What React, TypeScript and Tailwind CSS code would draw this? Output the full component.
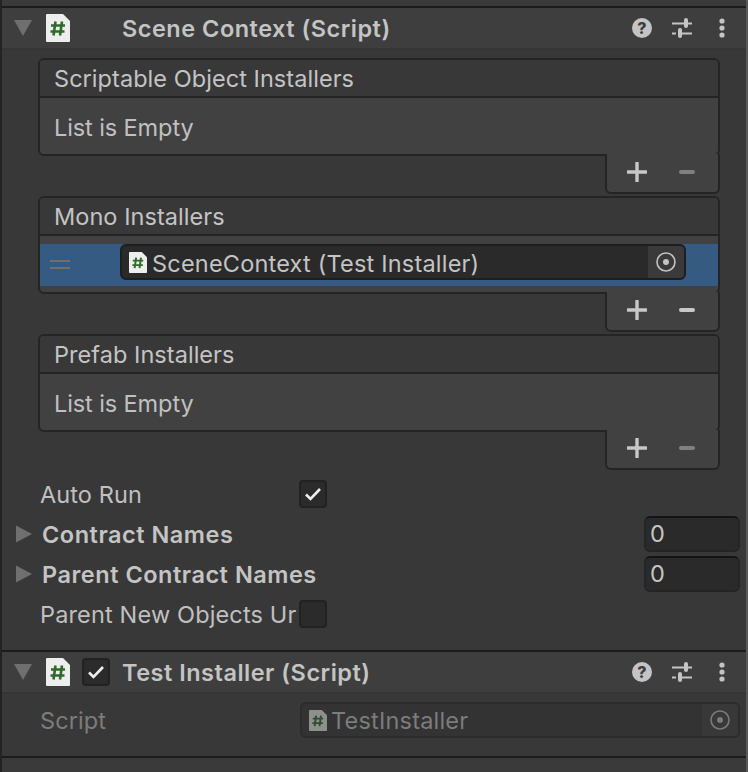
const font = "font-['Inter','Noto_Sans',sans-serif]";

function Triangle({ dir }: { dir: "down" | "right" }) {
  return (
    <svg width="18" height="18" viewBox="0 0 18 18" className="shrink-0">
      {dir === "down" ? <path d="M0 1H18L9 17Z" fill="#6f6f6f" /> : <path d="M1 1L17 9L1 17Z" fill="#6f6f6f" />}
    </svg>
  );
}

function ScriptIcon({ size = 24, dim = false }: { size?: number; dim?: boolean }) {
  const h = Math.round((size * 28) / 24);
  return (
    <svg width={size} height={h} viewBox="0 0 24 28" className="shrink-0">
      <path d="M1 0H17L24 7V27a1 1 0 0 1-1 1H1a1 1 0 0 1-1-1V1a1 1 0 0 1 1-1Z" fill={dim ? "#8f8f8f" : "#eeeeee"} />
      <path
        d="M9.5 7.5L7.5 21.5M16 7.5L14 21.5M5 11.5H19M4.5 17.5H18.5"
        stroke={dim ? "#2f4f2c" : "#2f6a2c"}
        strokeWidth="2.6"
        fill="none"
      />
    </svg>
  );
}

function HelpIcon() {
  return (
    <svg width="20" height="20" viewBox="0 0 20 20" className="shrink-0">
      <circle cx="10" cy="10" r="10" fill="#c4c4c4" />
      <text x="10" y="15.5" textAnchor="middle" fontSize="16" fontWeight="800" fontFamily="Inter, sans-serif" fill="#3e3e3e">
        ?
      </text>
    </svg>
  );
}

function SlidersIcon() {
  return (
    <svg width="20" height="20" viewBox="0 0 20 20" className="shrink-0">
      <path d="M0 5.5H20M0 15.5H4M8 15.5H20" stroke="#c4c4c4" strokeWidth="2" fill="none" />
      <rect x="12" y="0" width="4" height="10" rx="2" fill="#c4c4c4" />
      <rect x="6" y="10" width="4" height="10" rx="2" fill="#c4c4c4" />
    </svg>
  );
}

function DotsIcon() {
  return (
    <svg width="6" height="20" viewBox="0 0 6 20" className="shrink-0">
      <circle cx="3" cy="3" r="2.6" fill="#c4c4c4" />
      <circle cx="3" cy="10" r="2.6" fill="#c4c4c4" />
      <circle cx="3" cy="17" r="2.6" fill="#c4c4c4" />
    </svg>
  );
}

function TargetIcon({ dim = false }: { dim?: boolean }) {
  const c = dim ? "#7b7b7b" : "#c4c4c4";
  return (
    <svg width="20" height="20" viewBox="0 0 20 20" className="shrink-0">
      <circle cx="10" cy="10" r="9" stroke={c} strokeWidth="1.6" fill="none" />
      <circle cx="10" cy="10" r="3" fill={c} />
    </svg>
  );
}

function Checkbox({ checked = false }: { checked?: boolean }) {
  return (
    <div className="flex h-7 w-7 shrink-0 items-center justify-center rounded-[4px] border-2 border-[#222222] bg-[#2b2b2b]">
      {checked && (
        <svg width="18" height="14" viewBox="0 0 18 14">
          <path d="M2 7.5L6.5 12L16 2" stroke="#eeeeee" strokeWidth="2.6" fill="none" />
        </svg>
      )}
    </div>
  );
}

function ComponentHeader({ title, toggle = false }: { title: string; toggle?: boolean }) {
  return (
    <div className="flex h-[42px] items-center border-b-2 border-[#353535] bg-[#3e3e3e] pl-[12px] pr-[21px]">
      <Triangle dir="down" />
      <div className="ml-[14px] w-[24px]">
        <ScriptIcon />
      </div>
      <div className="ml-[12px] w-[28px]">{toggle && <Checkbox checked />}</div>
      <div className="ml-[12px] flex-1 pt-[1px] text-[23.5px] font-semibold leading-none tracking-[0.5px] text-[#c4c4c4]">{title}</div>
      <div className="flex items-center">
        <HelpIcon />
        <div className="ml-[20px]">
          <SlidersIcon />
        </div>
        <div className="ml-[27px]">
          <DotsIcon />
        </div>
      </div>
    </div>
  );
}

function ListFooter({ minusDim = false }: { minusDim?: boolean }) {
  return (
    <div className="relative z-10 ml-[567px] -mt-[2px] flex h-[40px] w-[115px] rounded-b-[6px] border-x-2 border-b-2 border-[#242424] bg-[#414141] pl-[20px]">
      <svg width="20" height="20" viewBox="0 0 20 20" className="mt-[8px] shrink-0">
        <path d="M10 1V19M1 10H19" stroke="#c8c8c8" strokeWidth="3.4" strokeLinecap="round" fill="none" />
      </svg>
      <svg width="16" height="4" viewBox="0 0 16 4" className="ml-[32px] mt-[16px] shrink-0">
        <rect width="16" height="4" rx="2" fill={minusDim ? "#808080" : "#c8c8c8"} />
      </svg>
    </div>
  );
}

function ReorderList({ title, children, minusDim }: { title: string; children: React.ReactNode; minusDim?: boolean }) {
  return (
    <div>
      <div className="overflow-hidden rounded-[6px] border-2 border-[#242424] bg-[#414141]">
        <div className="flex h-[38px] items-center border-b-2 border-[#242424] bg-[#383838] pl-[14px] pt-[2px] text-[23.5px] leading-none tracking-[0.05px] text-[#c4c4c4]">
          {title}
        </div>
        {children}
      </div>
      <ListFooter minusDim={minusDim} />
    </div>
  );
}

function EmptyBody() {
  return <div className="flex h-[56px] items-center pl-[14px] pt-[4px] text-[23.5px] leading-none tracking-[-0.1px] text-[#c0c0c0]">List is Empty</div>;
}

function FoldoutRow({ label }: { label: string }) {
  return (
    <div className="flex h-[40px] items-center pl-[14px] pr-[6px]">
      <svg width="16" height="18" viewBox="0 0 16 18" className="shrink-0">
        <path d="M0 0.5L16 9L0 17.5Z" fill="#6f6f6f" />
      </svg>
      <div className="ml-[10px] flex-1 pt-[1px] text-[23.5px] font-semibold leading-none tracking-[0.52px] text-[#c4c4c4]">{label}</div>
      <div className="flex h-[36px] w-[96px] items-center rounded-[6px] border-2 border-[#242424] border-t-[#141414] bg-[#2a2a2a] pl-[4px] text-[23.5px] leading-none text-[#c4c4c4]">
        0
      </div>
    </div>
  );
}

export default function App() {
  return (
    <div className={`${font} flex h-[772px] w-[748px] flex-col overflow-hidden border-l-2 border-r-2 border-l-[#232323] border-r-[#5a5a5a] bg-[#383838]`}>
      <div className="h-[6px] bg-[#3a3a3a]" />
      <div className="h-[2px] bg-[#1c1c1c]" />
      <ComponentHeader title="Scene Context (Script)" />

      <div className="flex flex-col gap-[2px] pl-[36px] pr-[26px] pt-[8px]">
        <ReorderList title="Scriptable Object Installers" minusDim>
          <EmptyBody />
        </ReorderList>
        <ReorderList title="Mono Installers">
          <div className="mt-[8px] h-[42px] bg-[#365b82]">
            <div className="flex h-[36px] items-center">
              <div className="ml-[10px] mt-[4px] h-[9px] w-[20px] shrink-0 border-y-2 border-[#6f6f70]" />
              <div className="ml-[50px] flex h-[36px] w-[566px] items-center overflow-hidden rounded-[6px] border-2 border-[#1e1e1e] bg-[#2a2a2a] pl-[7px] text-[23.5px] leading-none tracking-[0.2px] text-[#c4c4c4]">
                <ScriptIcon size={18} />
                <span className="ml-[5px] flex-1 pt-[3px]">SceneContext (Test Installer)</span>
                <div className="flex h-full w-[36px] items-center justify-center bg-[#3a3a3a]">
                  <TargetIcon />
                </div>
              </div>
            </div>
          </div>
          <div className="h-[6px]" />
        </ReorderList>
        <ReorderList title="Prefab Installers" minusDim>
          <EmptyBody />
        </ReorderList>
      </div>

      <div className="mt-[4px] text-[23.5px] leading-none">
        <div className="flex h-[40px] items-center pl-[38px]">
          <span className="w-[259px] pt-[2px] tracking-[0.1px] text-[#c0c0c0]">Auto Run</span>
          <Checkbox checked />
        </div>
        <FoldoutRow label="Contract Names" />
        <FoldoutRow label="Parent Contract Names" />
        <div className="flex h-[40px] items-center pl-[38px]">
          <span className="w-[259px] whitespace-nowrap pt-[2px] tracking-[0.15px] text-[#c0c0c0]">Parent New Objects Ur</span>
          <Checkbox />
        </div>
      </div>

      <div className="mt-[16px] h-[2px] bg-[#1c1c1c]" />
      <ComponentHeader title="Test Installer (Script)" toggle />

      <div className="flex h-[62px] items-start pl-[38px] pr-[6px] pt-[8px] text-[23.5px] leading-none text-[#7c7c7c]">
        <span className="flex h-[36px] w-[260px] items-center pt-[2px] tracking-[0.1px]">Script</span>
        <div className="flex h-[36px] flex-1 items-center overflow-hidden rounded-[6px] border-2 border-[#2c2c2c] bg-[#333333] pl-[7px]">
          <ScriptIcon size={18} dim />
          <span className="ml-[4px] flex-1 pt-[2px] tracking-[0.2px]">TestInstaller</span>
          <div className="flex h-full w-[36px] items-center justify-center bg-[#383838]">
            <TargetIcon dim />
          </div>
        </div>
      </div>

      <div className="h-[2px] bg-[#1c1c1c]" />
      <div className="flex-1 bg-[#3a3a3a]" />
    </div>
  );
}
